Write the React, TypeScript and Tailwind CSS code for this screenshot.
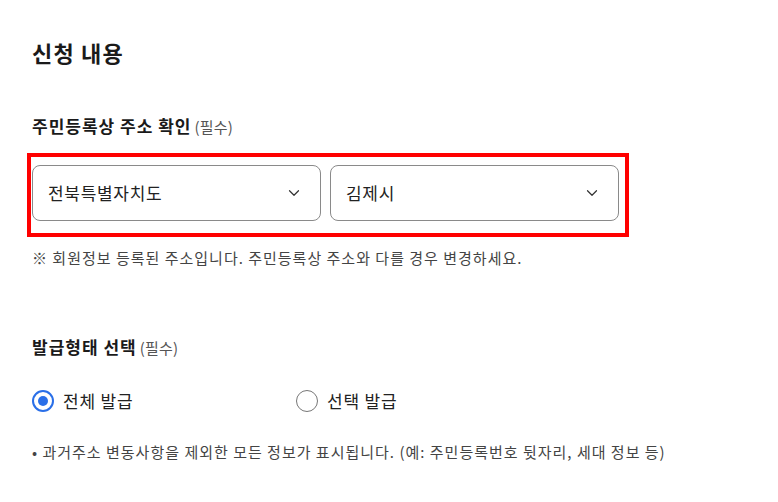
import { ChevronDown } from 'lucide-react';

const SelectBox = ({ value }: { value: string }) => (
  <div className="flex h-[56px] flex-1 items-center justify-between rounded-[8px] border border-[#8a8a8a] bg-white pr-[17px] pl-[15px]">
    <span className="text-[17px] tracking-[0.7px] text-[#222]">{value}</span>
    <ChevronDown className="h-[18px] w-[18px] text-[#333]" strokeWidth={1.6} />
  </div>
);

const Radio = ({ label, checked }: { label: string; checked?: boolean }) => (
  <label className="flex items-center gap-[9px]">
    <span
      className={
        checked
          ? 'flex h-[22px] w-[22px] items-center justify-center rounded-full border-2 border-[#2a6fe8]'
          : 'h-[22px] w-[22px] rounded-full border border-[#777]'
      }
    >
      {checked && <span className="h-[10px] w-[10px] rounded-full bg-[#2a6fe8]" />}
    </span>
    <span className="text-[17px] tracking-[0.8px] text-[#222]">{label}</span>
  </label>
);

const Required = () => (
  <span className="ml-[3px] text-[15px] font-normal tracking-[0.2px] text-[#555]">(필수)</span>
);

export default function App() {
  return (
    <div
      className="min-h-[502px] w-[778px] bg-white pt-[34px] pl-[32px] text-[#1a1a1a]"
      style={{ fontFamily: '"Noto Sans CJK KR", "Noto Sans", sans-serif' }}
    >
      <h2 className="text-[22px] leading-[36px] font-bold tracking-[1.2px]">신청 내용</h2>

      <div className="mt-[43px] text-[17px] leading-[26px] font-bold tracking-[1px]">
        주민등록상 주소 확인
        <Required />
      </div>

      <div className="relative mt-[25px] flex w-[587px] gap-[9px]">
        <SelectBox value="전북특별자치도" />
        <SelectBox value="김제시" />
        <div className="pointer-events-none absolute -top-[12px] -right-[10px] -bottom-[16px] -left-[5px] border-4 border-[#ff0000]" />
      </div>

      <p className="mt-[26px] text-[15px] leading-[22px] tracking-[1px] text-[#444]">
        ※ 회원정보 등록된 주소입니다. 주민등록상 주소와 다를 경우 변경하세요.
      </p>

      <div className="mt-[65px] text-[17px] leading-[26px] font-bold tracking-[1px]">
        발급형태 선택
        <Required />
      </div>

      <div className="mt-[27px] flex">
        <div className="w-[264px]">
          <Radio label="전체 발급" checked />
        </div>
        <Radio label="선택 발급" />
      </div>

      <p className="mt-[27px] text-[15px] leading-[22px] tracking-[1px] text-[#444]">
        • 과거주소 변동사항을 제외한 모든 정보가 표시됩니다. (예: 주민등록번호 뒷자리, 세대 정보 등)
      </p>
    </div>
  );
}
